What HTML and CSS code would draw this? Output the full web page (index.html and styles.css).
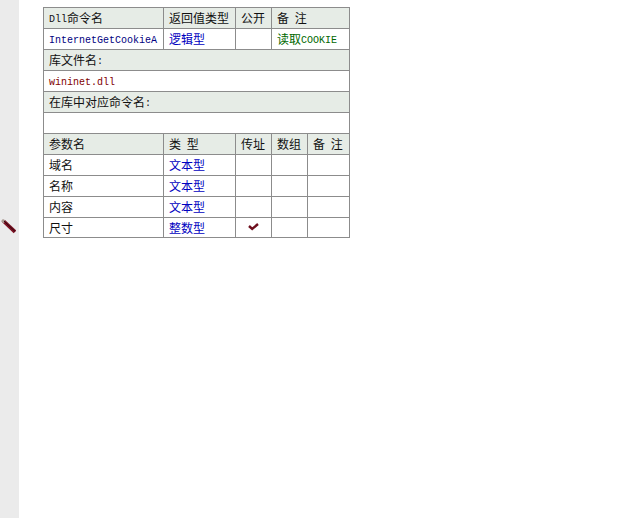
FILE: index.html
```html
<!DOCTYPE html>
<html lang="zh">
<head>
<meta charset="utf-8">
<title>Dll命令</title>
<link rel="stylesheet" href="styles.css">
</head>
<body>
<div class="page">
  <aside class="gutter">
    <svg class="pencil" width="15" height="15" viewBox="0 0 15 15" aria-hidden="true">
      <path d="M2.5 2 L14 13" stroke="#7a1022" stroke-width="3.8"/>
      <path d="M1 1 L3.5 3.2" stroke="#a89a92" stroke-width="3"/>
      <path d="M3 2 L14 12.4" stroke="#2e070c" stroke-width="1"/>
    </svg>
  </aside>
  <main class="content">
    <table class="decl">
      <colgroup>
        <col class="c1"><col class="c2"><col class="c3"><col class="c4"><col class="c5">
      </colgroup>
      <tr class="head">
        <td><span class="lat">Dll</span>命令名</td>
        <td>返回值类型</td>
        <td>公开</td>
        <td colspan="2">备 注</td>
      </tr>
      <tr>
        <td class="navy"><span class="lat">InternetGetCookieA</span></td>
        <td class="blue">逻辑型</td>
        <td></td>
        <td colspan="2" class="green">读取<span class="lat">COOKIE</span></td>
      </tr>
      <tr class="head"><td colspan="5">库文件名<span class="lat">:</span></td></tr>
      <tr><td colspan="5" class="red"><span class="lat">wininet.dll</span></td></tr>
      <tr class="head"><td colspan="5">在库中对应命令名<span class="lat">:</span></td></tr>
      <tr><td colspan="5"></td></tr>
      <tr class="head">
        <td>参数名</td>
        <td>类 型</td>
        <td>传址</td>
        <td>数组</td>
        <td>备 注</td>
      </tr>
      <tr><td>域名</td><td class="blue">文本型</td><td></td><td></td><td></td></tr>
      <tr><td>名称</td><td class="blue">文本型</td><td></td><td></td><td></td></tr>
      <tr><td>内容</td><td class="blue">文本型</td><td></td><td></td><td></td></tr>
      <tr class="last">
        <td>尺寸</td>
        <td class="blue">整数型</td>
        <td class="mark">
          <svg class="check" width="11" height="8" viewBox="0 0 11 8" aria-hidden="true">
            <path d="M1 3 L4.2 6 L10 1" fill="none" stroke="#6e0f1e" stroke-width="2.4"/>
          </svg>
        </td>
        <td></td>
        <td></td>
      </tr>
    </table>
  </main>
</div>
</body>
</html>
```
FILE: styles.css
```css
html, body {
  margin: 0;
  padding: 0;
  height: 100%;
  background: #fff;
}
.page {
  display: flex;
  height: 518px;
  overflow: hidden;
}
.gutter {
  width: 19px;
  flex: none;
  background: #ebebeb;
  padding: 219px 0 0 1px;
  box-sizing: border-box;
}
.pencil { display: block; }
.content {
  padding: 7px 0 0 24px;
}
.decl {
  border-collapse: collapse;
  table-layout: fixed;
  width: 307px;
  font: 12px/14px "Noto Sans CJK SC", sans-serif;
  color: #111;
}
.c1 { width: 120px; }
.c2 { width: 72px; }
.c3 { width: 36px; }
.c4 { width: 36px; }
.c5 { width: 42px; }
.decl td {
  height: 20px;
  padding: 0 0 0 5px;
  box-sizing: content-box;
  border: 1px solid #8c8c8c;
  white-space: nowrap;
  overflow: hidden;
  vertical-align: middle;
}
.decl .last td { height: 19px; }
.head td {
  background: #e6ece6;
  word-spacing: 3px;
}
.lat {
  font-family: "Liberation Mono", monospace;
  font-size: 10px;
  line-height: 0;
  vertical-align: 1px;
}
.blue { color: #0000c0; }
.navy { color: #000080; }
.green { color: #006800; }
.red { color: #800000; }
.decl .mark { text-align: center; padding: 0; }
.check { display: block; margin: 0 auto 2px; }
```
